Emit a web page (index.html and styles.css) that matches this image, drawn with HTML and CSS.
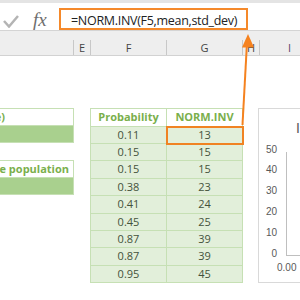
FILE: index.html
```html
<!DOCTYPE html>
<html lang="en">
<head>
    <meta charset="UTF-8">
    <meta name="viewport" content="width=device-width, initial-scale=1.0">
    <title>NORM.INV example</title>
    <link rel="stylesheet" href="styles.css">
</head>
<body>
    <div class="window">
        <div class="top-strip"></div>
        <div class="formula-bar">
            <svg class="check" viewBox="0 0 16 13"><path d="M1 6 L6 11.5 L15 1"/></svg>
            <span class="fx">fx</span>
            <div class="formula">=NORM.INV(F5,mean,std_dev)</div>
        </div>
        <div class="bar-gap"></div>
        <div class="col-heads">
            <div class="col-head col-d"></div>
            <div class="col-head col-e">E</div>
            <div class="col-head col-f">F</div>
            <div class="col-head col-g">G</div>
            <div class="col-head col-h">H</div>
            <div class="col-head col-i">I</div>
        </div>

        <div class="sheet">
            <div class="panel panel-mean">
                <div class="panel-label">Mean (average)</div>
                <div class="panel-value"></div>
            </div>
            <div class="panel panel-sd">
                <div class="panel-label">Standard deviation of the population</div>
                <div class="panel-value"></div>
            </div>

            <div class="table">
                <div class="cell head">Probability</div>
                <div class="cell head">NORM.INV</div>
                <div class="cell">0.11</div><div class="cell selected">13</div>
                <div class="cell">0.15</div><div class="cell">15</div>
                <div class="cell">0.15</div><div class="cell">15</div>
                <div class="cell">0.38</div><div class="cell">23</div>
                <div class="cell">0.41</div><div class="cell">24</div>
                <div class="cell">0.45</div><div class="cell">25</div>
                <div class="cell">0.87</div><div class="cell">39</div>
                <div class="cell">0.87</div><div class="cell">39</div>
                <div class="cell">0.95</div><div class="cell">45</div>
            </div>
        </div>

        <div class="chart">
            <div class="chart-title">Inverse normal</div>
            <div class="plot">
                <div class="y-labels">
                    <div>50</div><div>40</div><div>30</div><div>20</div><div>10</div><div>0</div>
                </div>
                <div class="axis"></div>
            </div>
            <div class="x-labels">0.00</div>
        </div>

        <svg class="arrow" viewBox="0 0 300 300">
            <line x1="242.5" y1="125" x2="246.8" y2="46"/>
            <polygon points="248,34 242,47.5 254,47.5"/>
        </svg>
    </div>
</body>
</html>
```

FILE: styles.css
```css
body {
    margin: 0;
    font-family: "Open Sans", sans-serif;
    background-color: #fff;
}
.window {
    position: relative;
    width: 300px;
    height: 300px;
    overflow: hidden;
}
.top-strip {
    height: 3px;
    background-color: #e4e4e4;
}
.formula-bar {
    display: flex;
    align-items: flex-start;
    height: 28px;
    box-sizing: border-box;
    padding-top: 5px;
    border-bottom: 1px solid #d4d4d4;
    background-color: #fff;
}
.check {
    width: 16px;
    height: 13px;
    margin: 7px 0 0 3px;
}
.check path {
    fill: none;
    stroke: #b4b4b4;
    stroke-width: 2.5;
}
.fx {
    width: 26px;
    margin: 2px 0 0 14px;
    font: italic 19px "Liberation Serif", serif;
    line-height: 20px;
    color: #6e6e6e;
}
.formula {
    width: 189px;
    height: 22px;
    box-sizing: border-box;
    padding: 3px 0 0 10px;
    border: 2px solid #f5892a;
    font-size: 12.5px;
    line-height: 15px;
    letter-spacing: -0.3px;
    color: #222;
    white-space: nowrap;
    overflow: hidden;
}
.bar-gap {
    height: 9px;
    background-color: #eeeeee;
}
.col-heads {
    display: flex;
    height: 16px;
    box-sizing: border-box;
    background-color: #eeeeee;
    border-bottom: 1px solid #d2d2d2;
}
.col-head {
    flex: none;
    box-sizing: border-box;
    border-right: 1px solid #c8c8c8;
    text-align: center;
    font-size: 11px;
    line-height: 15px;
    color: #444;
}
.col-d { width: 74px; }
.col-e { width: 17px; }
.col-f { width: 76px; }
.col-g { width: 76px; }
.col-h { width: 17px; }
.col-i { width: 60px; color: #5a3f6a; }

.sheet {
    display: grid;
    grid-template-columns: 74px 17px 76px 76px 17px 1fr;
    grid-auto-rows: 17.4px;
}
.panel {
    grid-column: 1;
    display: grid;
    grid-template-rows: 1fr 1fr;
    border: 1px solid #c6e0b4;
    border-left: none;
}
.panel-mean { grid-row: 4 / 6; }
.panel-sd { grid-row: 7 / 9; }
.panel-label {
    display: flex;
    justify-content: flex-end;
    overflow: hidden;
    white-space: nowrap;
    border-bottom: 1px solid #c6e0b4;
    font-size: 11px;
    font-weight: 700;
    line-height: 16px;
    color: #7aaf4c;
}
.panel-mean .panel-label { padding-right: 68px; }
.panel-sd .panel-label { padding-right: 4px; }
.panel-value {
    background-color: #a9d08e;
}

.table {
    grid-column: 3 / 5;
    grid-row: 4 / 14;
    align-self: start;
    margin-left: -1px;
    display: grid;
    grid-template-columns: 76px 76px;
    grid-auto-rows: 17.4px;
    border-top: 1px solid #c6e0b4;
    border-left: 1px solid #c6e0b4;
}
.cell {
    box-sizing: border-box;
    border-right: 1px solid #c6e0b4;
    border-bottom: 1px solid #c6e0b4;
    background-color: #e2efda;
    text-align: center;
    font-size: 11px;
    line-height: 16.4px;
    color: #44523a;
}
.cell.head {
    background-color: #fff;
    font-weight: 700;
    color: #7aaf4c;
}
.cell.selected {
    position: relative;
    outline: 2px solid #f08323;
    outline-offset: -1px;
}

.chart {
    position: absolute;
    left: 258px;
    top: 108px;
    width: 70px;
    height: 175px;
    box-sizing: border-box;
    border: 1px solid #d9d9d9;
    background-color: #fff;
    color: #595959;
    font-family: "Liberation Sans", Arial, sans-serif;
}
.chart-title {
    margin: 10px 0 0 37px;
    font-size: 14px;
    line-height: 18px;
    white-space: nowrap;
}
.plot {
    display: flex;
    margin-top: 2.6px;
}
.y-labels {
    width: 18px;
    text-align: right;
    font-size: 10px;
    line-height: 20.8px;
}
.axis {
    flex: 1;
    height: 104px;
    box-sizing: border-box;
    margin: 12.4px 0 0 9px;
    border-left: 1px solid #bfbfbf;
    border-bottom: 1px solid #bfbfbf;
}
.x-labels {
    margin: -2.4px 0 0 18px;
    font-size: 10px;
    line-height: 12px;
}

.arrow {
    position: absolute;
    left: 0;
    top: 0;
    width: 300px;
    height: 300px;
    pointer-events: none;
}
.arrow line {
    stroke: #f5821f;
    stroke-width: 2;
}
.arrow polygon {
    fill: #f5821f;
}
```
